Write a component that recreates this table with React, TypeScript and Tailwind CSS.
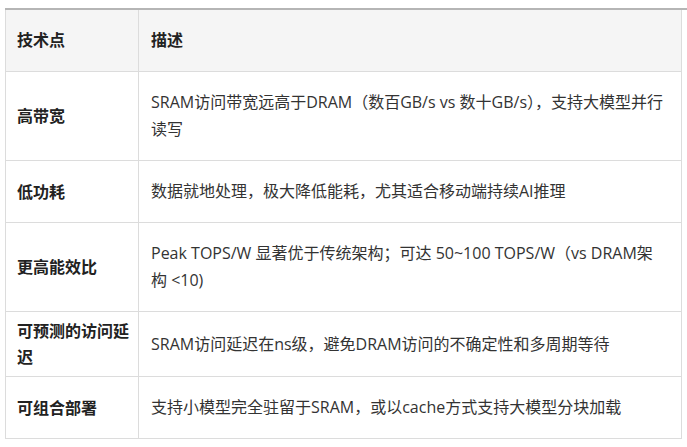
import type { ReactNode } from 'react';

const ROWS: { name: string; desc: ReactNode }[] = [
  { name: '高带宽', desc: 'SRAM访问带宽远高于DRAM（数百GB/s vs 数十GB/s），支持大模型并行读写' },
  { name: '低功耗', desc: '数据就地处理，极大降低能耗，尤其适合移动端持续AI推理' },
  {
    name: '更高能效比',
    desc: (
      <>
        Peak TOPS/W 显著优于传统架构；可达 50~100 TOPS/W（vs DRAM架
        <br />构 &lt;10)
      </>
    ),
  },
  { name: '可预测的访问延迟', desc: 'SRAM访问延迟在ns级，避免DRAM访问的不确定性和多周期等待' },
  { name: '可组合部署', desc: '支持小模型完全驻留于SRAM，或以cache方式支持大模型分块加载' },
];

export default function App() {
  return (
    <div
      className="min-h-screen bg-white pt-[8px] pl-[5px] text-[16px] text-[#333]"
      style={{ fontFamily: '"Open Sans", "Noto Sans CJK SC", sans-serif' }}
    >
      <div className="h-[2px] bg-[#b5b5b5]" />
      <table className="w-[677px] border-collapse table-fixed">
        <colgroup>
          <col className="w-[133px]" />
          <col />
        </colgroup>
        <thead>
          <tr className="bg-[#f5f5f5]">
            <th className="border border-[#dcdcdc] border-t-0 pl-[11px] pr-[4px] py-[17px] text-left align-middle font-bold leading-[27px] text-[#222]">
              技术点
            </th>
            <th className="border border-[#dcdcdc] border-t-0 px-[12px] py-[17px] text-left align-middle font-bold leading-[27px] text-[#222]">
              描述
            </th>
          </tr>
        </thead>
        <tbody>
          {ROWS.map(r => (
            <tr key={r.name}>
              <td className="border border-[#dcdcdc] pl-[11px] pr-[4px] py-[6px] align-middle font-bold leading-[26px] text-[#222]">
                {r.name}
              </td>
              <td className="border border-[#dcdcdc] px-[12px] py-[17px] align-middle leading-[27px]">
                {r.desc}
              </td>
            </tr>
          ))}
        </tbody>
      </table>
    </div>
  );
}
